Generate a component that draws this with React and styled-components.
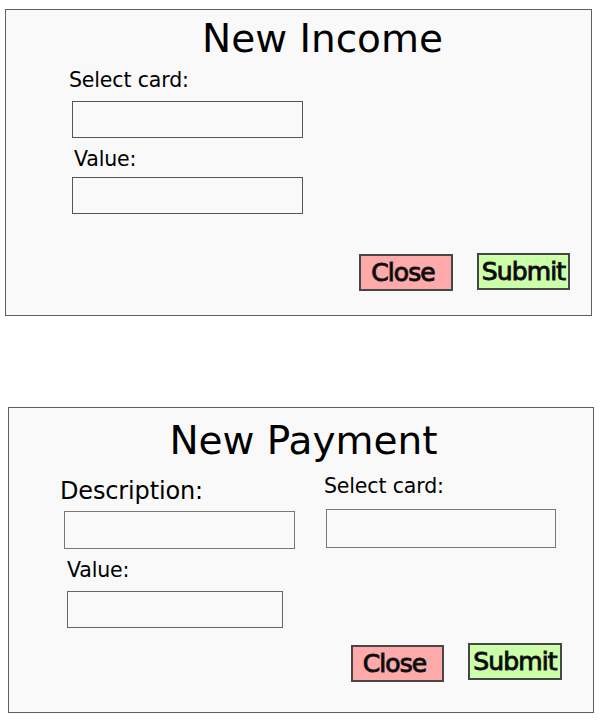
import React from "react";
import styled, { createGlobalStyle } from "styled-components";

const Global = createGlobalStyle`
  html, body { margin: 0; padding: 0; background: #ffffff; }
  body { font-family: "DejaVu Sans", "Liberation Sans", sans-serif; color: #000; }
  * { box-sizing: border-box; }
`;

const Page = styled.div`
  padding: 9px 0 0 5px;
  display: flex;
  flex-direction: column;
`;

const Panel = styled.section`
  display: flex;
  flex-direction: column;
  width: ${(p) => p.$w}px;
  height: ${(p) => p.$h}px;
  margin-top: ${(p) => p.$top || 0}px;
  margin-left: ${(p) => p.$left || 0}px;
  border: 1px solid #5f5f5f;
  background: #f9f9f9;
`;

const Title = styled.h1`
  margin: ${(p) => p.$top}px 0 0 0;
  padding-left: ${(p) => p.$shift}px;
  font-size: 39px;
  line-height: 39px;
  font-weight: normal;
  text-align: center;
`;

const Label = styled.label`
  display: block;
  margin-top: ${(p) => p.$top}px;
  margin-left: ${(p) => p.$left}px;
  font-size: ${(p) => p.$size || 20.5}px;
  line-height: ${(p) => p.$size || 20}px;
  letter-spacing: -0.15px;
  white-space: nowrap;
`;

const Input = styled.input`
  display: block;
  margin-top: ${(p) => p.$top}px;
  margin-left: ${(p) => p.$left}px;
  width: ${(p) => p.$w}px;
  height: ${(p) => p.$h}px;
  border: 1px solid ${(p) => p.$tone || "#555"};
  background: #f9f9f9;
  padding: 0 6px;
  font-family: inherit;
  font-size: 16px;
  outline: none;
`;

const Columns = styled.div`
  display: grid;
  grid-template-columns: 311px 1fr;
`;

const Column = styled.div`
  display: flex;
  flex-direction: column;
`;

const ButtonRow = styled.div`
  display: flex;
  justify-content: flex-end;
  align-items: flex-start;
  gap: 24px;
  margin-top: ${(p) => p.$top}px;
  padding-right: ${(p) => p.$right}px;
`;

const Button = styled.button`
  width: ${(p) => p.$w}px;
  height: 37px;
  margin-top: ${(p) => p.$dy || 0}px;
  padding: 0 ${(p) => p.$pr || 0}px 0 0;
  border: 2px solid #464646;
  background: ${(p) => (p.$variant === "submit" ? "#ccffaa" : "#ffaaaa")};
  font-family: "DejaVu Sans", "Liberation Sans", sans-serif;
  font-size: 25px;
  line-height: 25px;
  letter-spacing: -0.9px;
  color: #000;
  -webkit-text-stroke: 1px #1a1a1a;
  text-align: center;
  cursor: pointer;
`;

export default function App() {
  return (
    <>
      <Global />
      <Page>
        <Panel $w={587} $h={307}>
          <Title $top={9} $shift={48}>New Income</Title>
          <Label $top={12} $left={63}>Select card:</Label>
          <Input $top={11} $left={66} $w={231} $h={37} />
          <Label $top={11} $left={68}>Value:</Label>
          <Input $top={8} $left={66} $w={231} $h={37} />
          <ButtonRow $top={39} $right={21}>
            <Button $w={94} $dy={1} $pr={6}>Close</Button>
            <Button $w={93} $variant="submit">Submit</Button>
          </ButtonRow>
        </Panel>

        <Panel $w={586} $h={306} $top={91} $left={3}>
          <Title $top={13} $shift={5}>New Payment</Title>
          <Columns>
            <Column>
              <Label $top={19} $left={51} $size={24}>Description:</Label>
              <Input $top={8} $left={55} $w={231} $h={38} $tone="#777" />
              <Label $top={11} $left={58}>Value:</Label>
              <Input $top={11} $left={58} $w={216} $h={37} $tone="#666" />
            </Column>
            <Column>
              <Label $top={16} $left={4}>Select card:</Label>
              <Input $top={13} $left={6} $w={230} $h={39} $tone="#777" />
            </Column>
          </Columns>
          <ButtonRow $top={15} $right={31}>
            <Button $w={93} $dy={2} $pr={6}>Close</Button>
            <Button $w={94} $variant="submit">Submit</Button>
          </ButtonRow>
        </Panel>
      </Page>
    </>
  );
}
